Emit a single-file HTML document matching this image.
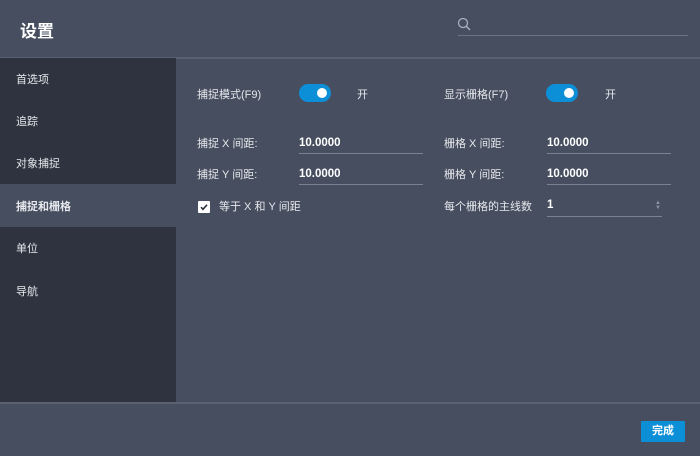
<!DOCTYPE html>
<html><head><meta charset="utf-8"><style>
*{margin:0;padding:0;box-sizing:border-box}
body{width:700px;height:456px;background:#464e5f;font-family:"Liberation Sans","Noto Sans CJK SC",sans-serif;color:#e6e8ec;position:relative;overflow:hidden;font-size:11px}
.abs{position:absolute}
.hl{height:2px;background:#5a6272;left:0;width:700px}
.side{left:0;top:58px;width:176px;height:345px;background:#2e333f}
.side div{position:absolute;left:16px;font-size:11px;color:#e6e8ec}
.sel{left:0;top:184px;width:176px;height:43px;background:#464e5f}
.lab{font-size:11px;color:#e6e8ec}
.val{font-size:11.5px;color:#fff;font-weight:bold}
.ul{height:1px;background:#7a8292}
.tog{width:32px;height:18px;border-radius:9px;background:#0d8fd8}
.tog::after{content:"";position:absolute;right:4px;top:4px;width:10px;height:10px;border-radius:50%;background:#fff}
</style></head><body>
<div class="abs" style="left:20px;top:17px;font-size:17px;font-weight:bold;color:#fff">设置</div>
<svg class="abs" style="left:457px;top:17px" width="16" height="16" viewBox="0 0 16 16"><circle cx="6" cy="6" r="4.5" fill="none" stroke="#aab0bb" stroke-width="1.3"/><line x1="9.3" y1="9.3" x2="13" y2="13" stroke="#aab0bb" stroke-width="1.5"/></svg>
<div class="abs ul" style="left:458px;top:35px;width:230px;background:#6b7382"></div>
<div class="abs hl" style="top:57px"></div>
<div class="abs side">
<div style="top:13px">首选项</div>
<div style="top:55px">追踪</div>
<div style="top:97px">对象捕捉</div>
<div style="top:182px">单位</div>
<div style="top:225px">导航</div>
</div>
<div class="abs sel"></div>
<div class="abs lab" style="left:16px;top:198px;font-weight:bold">捕捉和栅格</div>

<div class="abs lab" style="left:197px;top:86px">捕捉模式(F9)</div>
<div class="abs tog" style="left:299px;top:84px"></div>
<div class="abs lab" style="left:357px;top:86px">开</div>
<div class="abs lab" style="left:444px;top:86px">显示栅格(F7)</div>
<div class="abs tog" style="left:546px;top:84px"></div>
<div class="abs lab" style="left:605px;top:86px">开</div>

<div class="abs lab" style="left:197px;top:135px">捕捉 X 间距:</div>
<div class="abs val" style="left:299px;top:137px">10.0000</div>
<div class="abs ul" style="left:299px;top:153px;width:124px"></div>
<div class="abs lab" style="left:197px;top:166px">捕捉 Y 间距:</div>
<div class="abs val" style="left:299px;top:168px">10.0000</div>
<div class="abs ul" style="left:299px;top:184px;width:124px"></div>

<div class="abs lab" style="left:444px;top:135px">栅格 X 间距:</div>
<div class="abs val" style="left:547px;top:137px">10.0000</div>
<div class="abs ul" style="left:547px;top:153px;width:124px"></div>
<div class="abs lab" style="left:444px;top:166px">栅格 Y 间距:</div>
<div class="abs val" style="left:547px;top:168px">10.0000</div>
<div class="abs ul" style="left:547px;top:184px;width:124px"></div>

<div class="abs" style="left:198px;top:201px;width:12px;height:12px;background:#fff;border-radius:1px"></div>
<svg class="abs" style="left:198px;top:201px" width="12" height="12"><path d="M3 6.2L5 8.3L9 3.8" fill="none" stroke="#2e333f" stroke-width="1.6"/></svg>
<div class="abs lab" style="left:219px;top:198px">等于 X 和 Y 间距</div>

<div class="abs lab" style="left:444px;top:198px">每个栅格的主线数</div>
<div class="abs val" style="left:547px;top:199px">1</div>
<div class="abs" style="left:655px;top:201px;font-size:6px;color:#8a92a0;line-height:5px">▲<br>▼</div>
<div class="abs ul" style="left:547px;top:216px;width:115px"></div>

<div class="abs hl" style="top:402px"></div>
<div class="abs" style="left:641px;top:421px;width:44px;height:21px;background:#0d8fd8;border-radius:1px;color:#fff;font-size:11px;font-weight:bold;text-align:center;line-height:21px">完成</div>
</body></html>
